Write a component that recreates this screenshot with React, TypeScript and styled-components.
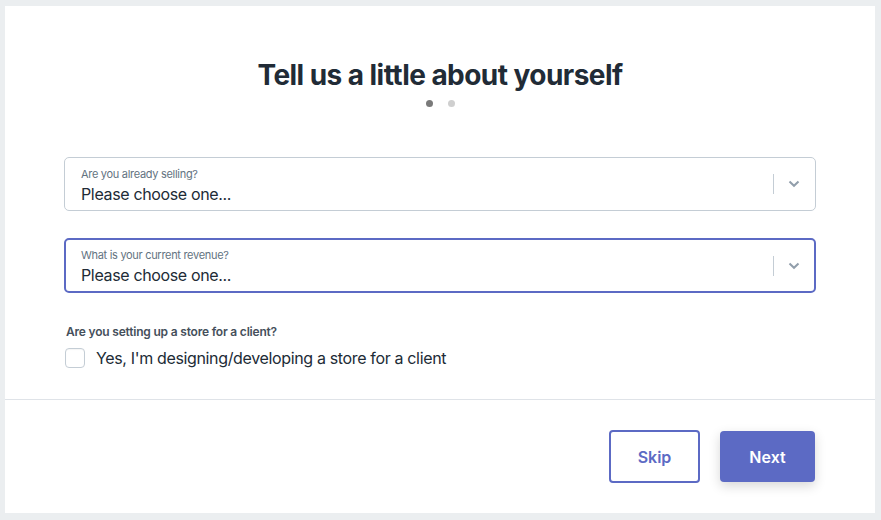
import React from 'react';
import styled, { createGlobalStyle } from 'styled-components';

const GlobalStyle = createGlobalStyle`
  html, body {
    margin: 0;
    padding: 0;
    background: #ebeef0;
    font-family: Inter, "Noto Sans", Arial, sans-serif;
    -webkit-font-smoothing: antialiased;
  }
`;

const Page = styled.div`
  padding: 6px 6px 7px 5px;
`;

const Card = styled.div`
  width: 870px;
  height: 507px;
  background: #fff;
  display: flex;
  flex-direction: column;
`;

const Body = styled.div`
  flex: 1;
  padding: 52px 59px 0;
  display: flex;
  flex-direction: column;
`;

const Title = styled.h1`
  margin: 0;
  text-align: center;
  font-size: 28px;
  line-height: 34px;
  font-weight: 700;
  letter-spacing: -0.55px;
  color: #212b36;
`;

const Dots = styled.div`
  display: flex;
  justify-content: center;
  gap: 15px;
  margin-top: 8px;
`;

const Dot = styled.span<{ $active?: boolean }>`
  width: 7px;
  height: 7px;
  border-radius: 50%;
  background: ${p => (p.$active ? '#7a7a7a' : '#cfcfcf')};
`;

const Fields = styled.div`
  margin-top: 50px;
  display: flex;
  flex-direction: column;
  gap: 27px;
`;

const Select = styled.div<{ $focused?: boolean }>`
  height: ${p => (p.$focused ? '55px' : '54px')};
  box-sizing: border-box;
  border: ${p => (p.$focused ? '2px solid #5c6ac4' : '1px solid #c4cdd5')};
  border-radius: 5px;
  display: flex;
  align-items: center;
  padding: ${p => (p.$focused ? '0 0 0 15px' : '0 1px 0 16px')};
`;

const SelectText = styled.div`
  flex: 1;
  display: flex;
  flex-direction: column;
  padding-top: 2px;
`;

const SelectLabel = styled.span`
  font-size: 11px;
  line-height: 14px;
  letter-spacing: -0.3px;
  color: #637381;
`;

const SelectValue = styled.span`
  font-size: 16px;
  line-height: 20px;
  letter-spacing: -0.35px;
  color: #212b36;
  margin-top: 3px;
`;

const Divider = styled.span`
  width: 1px;
  height: 20px;
  background: #c4cdd5;
`;

const Chevron = styled.span`
  width: 40px;
  display: flex;
  justify-content: center;
  color: #919eab;
`;

const Question = styled.div`
  margin-top: 31px;
  font-size: 12px;
  line-height: 16px;
  font-weight: 600;
  letter-spacing: -0.2px;
  color: #454f5b;
  padding-left: 2px;
`;

const CheckRow = styled.label`
  display: flex;
  align-items: center;
  gap: 11px;
  margin-top: 8px;
  font-size: 16px;
  letter-spacing: -0.35px;
  color: #212b36;
`;

const Box = styled.span`
  width: 18px;
  height: 18px;
  border: 1px solid #c4cdd5;
  border-radius: 4px;
  margin-left: 1px;
  box-shadow: inset 0 1px 1px rgba(0, 0, 0, 0.04);
`;

const Footer = styled.div`
  border-top: 1px solid #dfe3e8;
  height: 114px;
  box-sizing: border-box;
  padding: 30px 60px 0 0;
  display: flex;
  justify-content: flex-end;
  align-items: flex-start;
  gap: 20px;
`;

const Button = styled.button<{ $primary?: boolean }>`
  height: ${p => (p.$primary ? '51px' : '53px')};
  margin-top: ${p => (p.$primary ? '1px' : '0')};
  width: ${p => (p.$primary ? '95px' : '91px')};
  box-sizing: border-box;
  border-radius: 4px;
  font-family: inherit;
  font-size: 16px;
  font-weight: 600;
  border: ${p => (p.$primary ? 'none' : '2px solid #5c6ac4')};
  background: ${p => (p.$primary ? '#5c6ac4' : '#fff')};
  color: ${p => (p.$primary ? '#fff' : '#5c6ac4')};
  box-shadow: ${p => (p.$primary ? '0 4px 12px rgba(0,0,0,0.16)' : 'none')};
`;

const ChevronIcon = () => (
  <svg width="12" height="8" viewBox="0 0 12 8">
    <path d="M1.5 1.5 L6 5.8 L10.5 1.5" fill="none" stroke="currentColor" strokeWidth="2" />
  </svg>
);

const Field = ({ label, focused }: { label: string; focused?: boolean }) => (
  <Select $focused={focused}>
    <SelectText>
      <SelectLabel>{label}</SelectLabel>
      <SelectValue>Please choose one...</SelectValue>
    </SelectText>
    <Divider />
    <Chevron>
      <ChevronIcon />
    </Chevron>
  </Select>
);

export default function App() {
  return (
    <Page>
      <GlobalStyle />
      <Card>
        <Body>
          <Title>Tell us a little about yourself</Title>
          <Dots>
            <Dot $active />
            <Dot />
          </Dots>
          <Fields>
            <Field label="Are you already selling?" />
            <Field label="What is your current revenue?" focused />
          </Fields>
          <Question>Are you setting up a store for a client?</Question>
          <CheckRow>
            <Box />
            Yes, I'm designing/developing a store for a client
          </CheckRow>
        </Body>
        <Footer>
          <Button>Skip</Button>
          <Button $primary>Next</Button>
        </Footer>
      </Card>
    </Page>
  );
}
